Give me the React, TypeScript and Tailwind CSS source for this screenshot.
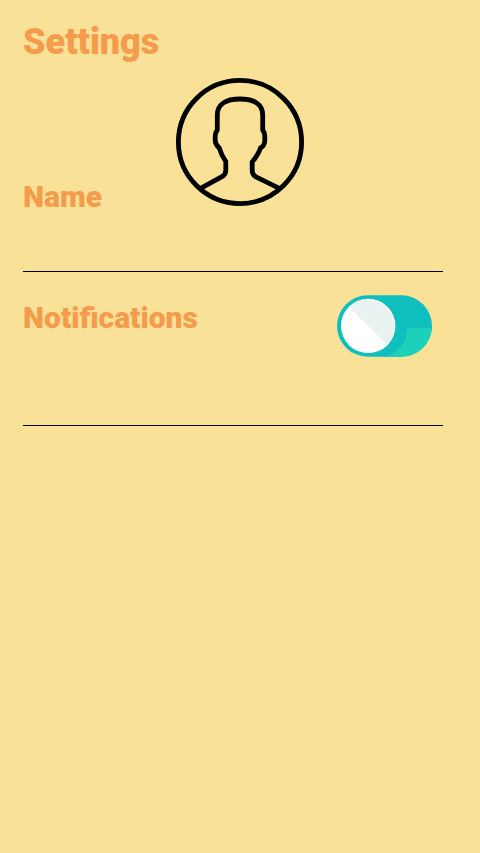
function Avatar() {
  return (
    <svg className="size-32" viewBox="0 0 128 128" fill="none" stroke="#000" strokeWidth="4.8">
      <circle cx="64" cy="64" r="61.6" />
      <path d="M24.5 110.3 46 98.7Q49.8 96.5 49.8 92.5V83.5C47.5 80 45 76 43.2 69.8C40.3 67.5 39.2 65.5 39.2 62V58C39.2 55.5 39.8 54 41.3 52V37C41.3 26 50 21 64 21S86.7 26 86.7 37V52C88.2 54 88.8 55.5 88.8 58V62C88.8 66.5 87.5 68.5 84.5 70C82.5 76 80 79.5 76.2 84V92.5Q76.2 96.8 80 98.9L103.3 110.3" />
    </svg>
  );
}

function Toggle() {
  return (
    <svg className="h-[62px] w-[95px]" viewBox="0 0 95 62">
      <rect y="0.2" width="95" height="61.5" rx="30.75" fill="#0fbfbd" />
      <path d="M70.3 32.7H94.9C94 48.8 80.8 61.7 64.2 61.7H47C61 58.5 70.3 47 70.3 32.7Z" fill="#1dd0b9" />
      <circle cx="31.2" cy="30.9" r="27.2" fill="#fff" />
      <path d="M12 11.7A27.2 27.2 0 0 1 50.4 50.1Z" fill="#e8f3f1" />
    </svg>
  );
}

export default function App() {
  return (
    <main className="min-h-screen bg-[#f9e198] pr-[37px] pl-[23px] font-['Roboto',sans-serif] font-black text-[#f59b4c]">
      <h1 className="pt-[21px] text-[36px] leading-[42px]">Settings</h1>
      <section className="flex h-[209px] items-start border-b border-black">
        <h2 className="mt-[116px] w-[153px] text-[30px] leading-[36px]">Name</h2>
        <div className="mt-[15px]">
          <Avatar />
        </div>
      </section>
      <section className="flex h-[154px] items-start justify-between border-b border-black pr-[11px]">
        <h2 className="mt-7 text-[30px] leading-[36px]">Notifications</h2>
        <div className="mt-[23px]">
          <Toggle />
        </div>
      </section>
    </main>
  );
}
